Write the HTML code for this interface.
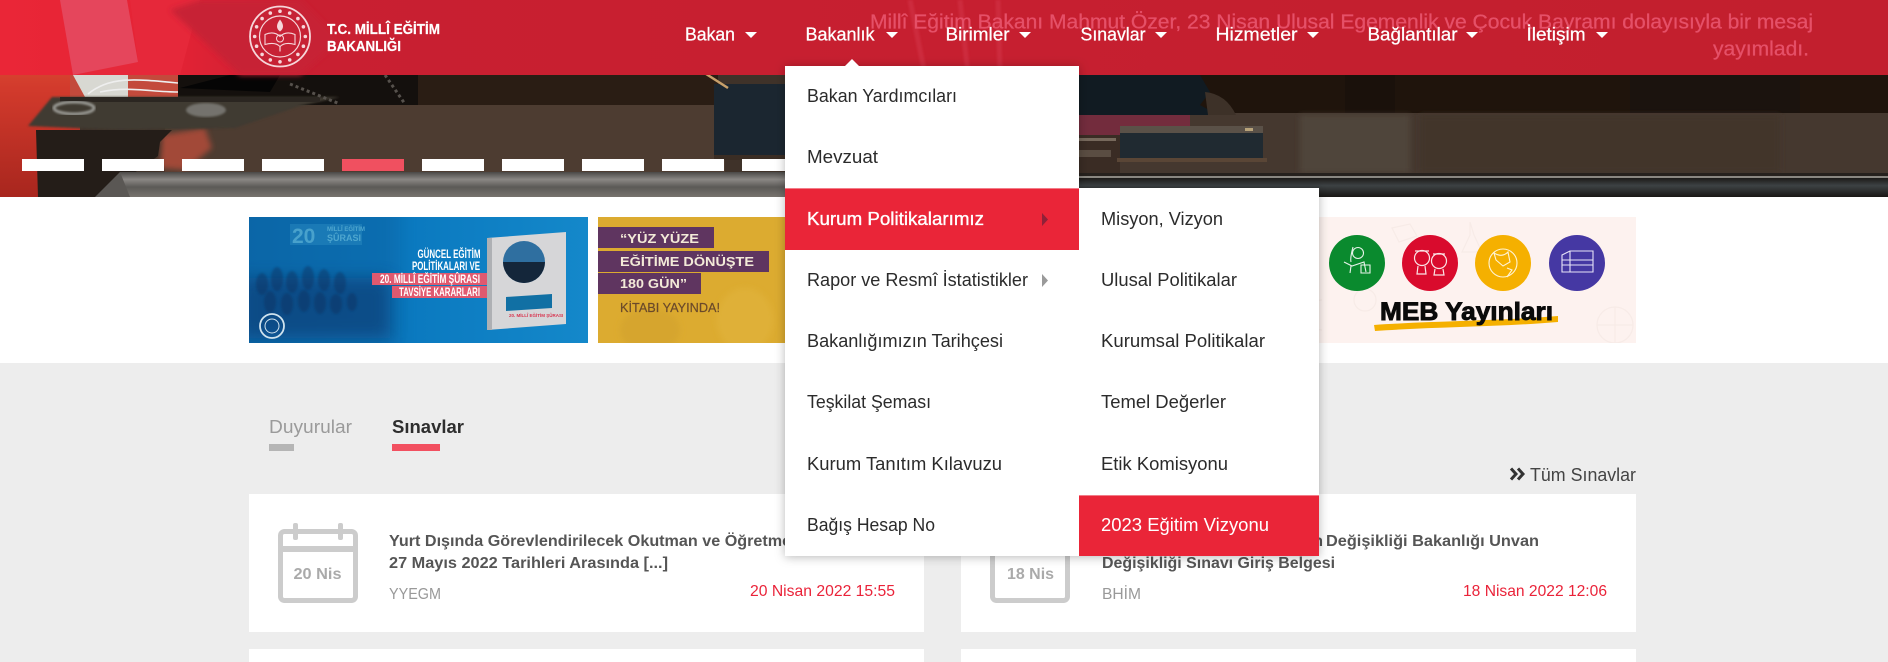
<!DOCTYPE html>
<html lang="tr">
<head>
<meta charset="utf-8">
<title>T.C. Millî Eğitim Bakanlığı</title>
<style>
html,body{margin:0;padding:0;background:#fff;width:1888px;height:662px;overflow:hidden}
svg{display:block;font-family:"Liberation Sans",Arial,sans-serif}
.nav text{fill:#fff;font-size:18px;stroke:#fff;stroke-width:.25}
.mi{fill:#2b2b2b;font-size:18px}
.ct{fill:#555;font-size:16px;font-weight:700}
.cs{fill:#999;font-size:16px}
.cd{fill:#ea2339;font-size:16px}
.ban{font-weight:700}
</style>
</head>
<body>
<svg xmlns="http://www.w3.org/2000/svg" width="1888" height="662" viewBox="0 0 1888 662">
<defs>
<filter id="b1" x="-5%" y="-5%" width="110%" height="110%"><feGaussianBlur stdDeviation="1"/></filter>
<filter id="b3" x="-20%" y="-20%" width="140%" height="140%"><feGaussianBlur stdDeviation="3"/></filter>
<filter id="b8" x="-30%" y="-30%" width="160%" height="160%"><feGaussianBlur stdDeviation="8"/></filter>
<filter id="sh" x="-10%" y="-10%" width="120%" height="120%"><feDropShadow dx="0" dy="1" stdDeviation="5" flood-color="#000" flood-opacity=".28"/></filter>
<clipPath id="c1"><rect x="249" y="217" width="339" height="126"/></clipPath>
<clipPath id="c2"><rect x="598" y="217" width="187" height="126"/></clipPath>
<clipPath id="c3"><rect x="1297" y="217" width="339" height="126"/></clipPath>
<linearGradient id="left" x1="0" y1="0" x2="0" y2="1"><stop offset="0" stop-color="#e8643c"/><stop offset=".45" stop-color="#d23a2c"/><stop offset="1" stop-color="#a8261e"/></linearGradient>
<linearGradient id="metal" x1="0" y1="0" x2="0" y2="1"><stop offset="0" stop-color="#4a4846"/><stop offset=".3" stop-color="#8a8784"/><stop offset=".6" stop-color="#5c5a57"/><stop offset="1" stop-color="#77736e"/></linearGradient>
<linearGradient id="black" x1="0" y1="0" x2="0" y2="1"><stop offset="0" stop-color="#1c1a18"/><stop offset=".4" stop-color="#3d4244"/><stop offset="1" stop-color="#191715"/></linearGradient>
<linearGradient id="ban1" x1="0" y1="0" x2="1" y2="0"><stop offset="0" stop-color="#0b6cae"/><stop offset=".5" stop-color="#0b7ac0"/><stop offset="1" stop-color="#1488ca"/></linearGradient>
<linearGradient id="hdr" x1="0" y1="0" x2="1" y2="0"><stop offset="0" stop-color="#ea2637"/><stop offset=".09" stop-color="#e42335"/><stop offset=".16" stop-color="#c91f31"/><stop offset="1" stop-color="#c21f2e"/></linearGradient>
</defs>

<!-- hero -->
<g>
<rect x="0" y="0" width="1888" height="197" fill="#3f3229"/>
<rect x="0" y="0" width="80" height="197" fill="url(#left)"/>
<rect x="70" y="75" width="110" height="25" fill="#c34a3c"/>
<polygon points="73,75 128,75 128,97 85,97" fill="#d8d8d2"/>
<path d="M88,94 C110,76 135,79 178,83 M100,92 C130,86 150,92 178,92" fill="none" stroke="#eee" stroke-width="1.6"/>
<rect x="178" y="75" width="240" height="30" fill="#14100d"/>
<rect x="418" y="75" width="300" height="30" fill="#2a1d14"/>
<rect x="165" y="105" width="560" height="68" fill="#4d3c31"/>
<path d="M162,135 L205,128 L212,148 L185,170 L160,168 Z" fill="#a24a38" filter="url(#b3)"/>
<polygon points="28,126 52,97 340,97 300,106 235,128 120,130" fill="#3f3a31" filter="url(#b1)"/>
<rect x="60" y="97" width="260" height="5" fill="#2b2621"/>
<ellipse cx="74" cy="108" rx="20" ry="6" fill="none" stroke="#9a9a94" stroke-width="3" filter="url(#b1)"/>
<ellipse cx="206" cy="110" rx="20" ry="7" fill="#8a8a86" opacity=".7" filter="url(#b1)"/>
<path d="M36,130 L172,130 L160,142 L158,156 L130,176 L95,197 L38,197 Z" fill="#241d18"/>
<path d="M180,88 L230,75 L280,75 L270,92 Z" fill="#050505"/>
<path d="M290,84 L340,104 M385,75 L405,104" stroke="#56514c" stroke-width="3" stroke-dasharray="3 3" fill="none"/>
<rect x="120" y="172" width="680" height="25" fill="url(#metal)"/>
<path d="M95,197 L120,172 L130,197 Z" fill="#5a5754"/>
<rect x="714" y="84" width="71" height="71" fill="#1b2630"/>
<rect x="714" y="155" width="71" height="5" fill="#3a2d24"/>
<path d="M703,72 L728,88" stroke="#c8a06a" stroke-width="2.5"/>
<!-- centre-right -->
<rect x="1079" y="75" width="809" height="38" fill="#1f140c"/>
<rect x="1345" y="75" width="50" height="38" fill="#1a110b"/>
<rect x="1630" y="75" width="170" height="38" fill="#1b130e"/>
<rect x="1079" y="113" width="809" height="60" fill="#45382f"/>
<rect x="1300" y="115" width="110" height="58" fill="#4f443a" filter="url(#b3)"/>
<rect x="1420" y="115" width="360" height="58" fill="#43352b" filter="url(#b3)"/>
<path d="M1079,75 L1200,75 L1210,92 L1200,105 L1218,115 L1079,115 Z" fill="#111b22"/>
<path d="M1205,92 Q1226,94 1236,115 L1208,115 Z" fill="#3d3128"/>
<rect x="1079" y="115" width="111" height="20" fill="#732c3d"/>
<rect x="1079" y="135" width="41" height="40" fill="#3a2c24"/>
<rect x="1079" y="138" width="37" height="3" fill="#77695c"/>
<rect x="1079" y="150" width="32" height="7" fill="#5a4d42"/>
<rect x="1120" y="126" width="143" height="7" fill="#5a5148"/>
<rect x="1120" y="133" width="143" height="25" fill="#202a31"/>
<rect x="1117" y="158" width="150" height="4" fill="#5a4636"/>
<rect x="1245" y="128" width="8" height="3" fill="#b8a37a"/>
<rect x="1079" y="173" width="809" height="3" fill="#26211d"/>
<rect x="1079" y="176" width="809" height="2" fill="#8a8781"/>
<rect x="1079" y="178" width="809" height="19" fill="url(#black)"/>
<!-- slide dots -->
<g fill="#fff">
<rect x="22" y="159" width="62" height="12"/><rect x="102" y="159" width="62" height="12"/>
<rect x="182" y="159" width="62" height="12"/><rect x="262" y="159" width="62" height="12"/>
<rect x="342" y="159" width="62" height="12" fill="#f05060"/><rect x="422" y="159" width="62" height="12"/>
<rect x="502" y="159" width="62" height="12"/><rect x="582" y="159" width="62" height="12"/>
<rect x="662" y="159" width="62" height="12"/><rect x="742" y="159" width="62" height="12"/>
</g>
</g>

<!-- header -->
<g>
<rect x="0" y="0" width="1888" height="75" fill="url(#hdr)"/>
<polygon points="130,0 138,60 73,75 180,75 200,0" fill="#e6283a"/>
<polygon points="60,0 127,0 138,62 73,75" fill="#e5465c"/>
<path d="M170,10 L200,0 L300,0 L340,40 L300,75 L240,75 Z" fill="#c72034" filter="url(#b3)"/>
<path d="M910,0 L925,75 M960,0 L968,75 M998,0 L1000,75" stroke="#d63a50" stroke-width="5" opacity=".45" fill="none" filter="url(#b1)"/>
<g fill="#e55068" stroke="#e55068" stroke-width=".3">
<text x="870" y="28.500" font-size="20" textLength="943" lengthAdjust="spacingAndGlyphs">Millî Eğitim Bakanı Mahmut Özer, 23 Nisan Ulusal Egemenlik ve Çocuk Bayramı dolayısıyla bir mesaj</text>
<text x="1713" y="55.500" font-size="20" textLength="96" lengthAdjust="spacingAndGlyphs">yayımladı.</text>
</g>

<!-- logo -->
<g fill="none" stroke="#f6d6da" transform="translate(280 36.5)">
<circle r="30" stroke-width="1.8"/>
<circle r="20.5" stroke-width="1.2"/>
<g fill="#f6d6da" stroke="none">
<circle cx="0" cy="-25.3" r="1.8"/><circle cx="9.7" cy="-23.4" r="1.8"/><circle cx="17.9" cy="-17.9" r="1.8"/><circle cx="23.4" cy="-9.7" r="1.8"/><circle cx="25.3" cy="0" r="1.8"/><circle cx="23.4" cy="9.7" r="1.8"/><circle cx="17.9" cy="17.9" r="1.8"/><circle cx="9.7" cy="23.4" r="1.8"/><circle cx="0" cy="25.3" r="1.8"/><circle cx="-9.7" cy="23.4" r="1.8"/><circle cx="-17.9" cy="17.9" r="1.8"/><circle cx="-23.4" cy="9.7" r="1.8"/><circle cx="-25.3" cy="0" r="1.8"/><circle cx="-23.4" cy="-9.7" r="1.8"/><circle cx="-17.9" cy="-17.9" r="1.8"/><circle cx="-9.7" cy="-23.4" r="1.8"/>
</g>
<path d="M0,-17 C4,-12 4,-8 0,-5 C-4,-8 -4,-12 0,-17 Z" fill="#f6d6da" stroke="none"/>
<path d="M-15,-2 C-8,-5 -3,-3 0,0 C3,-3 8,-5 15,-2 L15,8 C8,6 3,7 0,10 C-3,7 -8,6 -15,8 Z" stroke-width="1.1"/>
<circle cy="2" r="3.5" stroke-width="1"/>
<path d="M0,10 L0,15" stroke-width="1.2"/>
</g>
<g font-size="14.5" font-weight="700" fill="#fff" stroke="#fff" stroke-width=".2">
<text x="327" y="34" textLength="113" lengthAdjust="spacingAndGlyphs">T.C. MİLLÎ EĞİTİM</text>
<text x="327" y="51" textLength="74" lengthAdjust="spacingAndGlyphs">BAKANLIĞI</text>
</g>

<!-- nav -->
<g class="nav">
<text x="685" y="40.500" textLength="50" lengthAdjust="spacingAndGlyphs">Bakan</text>
<text x="805.500" y="40.500" textLength="69" lengthAdjust="spacingAndGlyphs">Bakanlık</text>
<text x="945.500" y="40.500" textLength="64" lengthAdjust="spacingAndGlyphs">Birimler</text>
<text x="1080.500" y="40.500" textLength="65" lengthAdjust="spacingAndGlyphs">Sınavlar</text>
<text x="1215.500" y="40.500" textLength="82" lengthAdjust="spacingAndGlyphs">Hizmetler</text>
<text x="1367.500" y="40.500" textLength="90" lengthAdjust="spacingAndGlyphs">Bağlantılar</text>
<text x="1526.500" y="40.500" textLength="59" lengthAdjust="spacingAndGlyphs">İletişim</text>
</g>
<g fill="#fff">
<polygon points="745,32 757,32 751,38"/><polygon points="886,32 898,32 892,38"/><polygon points="1019,32 1031,32 1025,38"/><polygon points="1155,32 1167,32 1161,38"/><polygon points="1307,32 1319,32 1313,38"/><polygon points="1466,32 1478,32 1472,38"/><polygon points="1596,32 1608,32 1602,38"/>
</g>
</g>

<!-- banners -->
<g>
<rect x="249" y="217" width="339" height="126" fill="url(#ban1)"/>
<g clip-path="url(#c1)">
<rect x="230" y="200" width="170" height="150" fill="#0a5f9e" opacity=".4" filter="url(#b8)"/>
<rect x="240" y="278" width="150" height="60" fill="#0b3f78" opacity=".7" filter="url(#b8)"/>
<g fill="#0a2f5c" opacity=".4" filter="url(#b1)">
<ellipse cx="262" cy="284" rx="6" ry="11"/><ellipse cx="277" cy="279" rx="6" ry="12"/><ellipse cx="292" cy="282" rx="6" ry="11"/><ellipse cx="308" cy="278" rx="6" ry="12"/><ellipse cx="324" cy="280" rx="6" ry="11"/><ellipse cx="340" cy="283" rx="6" ry="11"/>
<ellipse cx="270" cy="302" rx="6" ry="11"/><ellipse cx="287" cy="304" rx="6" ry="11"/><ellipse cx="304" cy="301" rx="6" ry="11"/><ellipse cx="320" cy="303" rx="6" ry="11"/><ellipse cx="336" cy="304" rx="6" ry="10"/><ellipse cx="352" cy="302" rx="5" ry="9"/>
</g>
</g>
<rect x="290" y="224" width="72" height="21" fill="#2d8fc3" opacity=".45"/>
<text x="292" y="243" font-size="21" font-weight="700" fill="#5cb2d6" opacity=".7">20</text>
<text x="327" y="231" font-size="6" font-weight="700" fill="#5cb2d6" opacity=".8">MİLLÎ EĞİTİM</text>
<text x="327" y="241" font-size="9" font-weight="700" fill="#5cb2d6" opacity=".8">ŞÛRASI</text>
<circle cx="272" cy="326" r="12" fill="none" stroke="#cfe3ee" stroke-width="1.8"/>
<circle cx="272" cy="326" r="7" fill="none" stroke="#cfe3ee"/>
<rect x="372" y="273" width="115" height="12" fill="#e0596f"/>
<rect x="392" y="286" width="95" height="12" fill="#e0596f"/>
<g class="ban" fill="#fff" font-size="12">
<text x="417.500" y="258" textLength="63" lengthAdjust="spacingAndGlyphs">GÜNCEL EĞİTİM</text>
<text x="412" y="270" textLength="68" lengthAdjust="spacingAndGlyphs">POLİTİKALARI VE</text>
<text x="380" y="283" textLength="100" lengthAdjust="spacingAndGlyphs">20. MİLLÎ EĞİTİM ŞÛRASI</text>
<text x="399" y="296" textLength="81" lengthAdjust="spacingAndGlyphs">TAVSİYE KARARLARI</text>
</g>
<polygon points="487,238 566,232 566,324 487,330" fill="#d6d6d8"/>
<rect x="487" y="238" width="5" height="92" fill="#aeb0b4"/>
<circle cx="524" cy="262" r="21" fill="#2f6fa0"/>
<path d="M503,262 A21,21 0 0 0 545,262 Z" fill="#14263a"/>
<polygon points="506,297 552,294 552,308 506,311" fill="#1170a4"/>
<text x="509" y="317" font-size="4.5" font-weight="700" fill="#d8344e">20. MİLLÎ EĞİTİM ŞÛRASI</text>
<rect x="598" y="217" width="187" height="126" fill="#dcab30"/>
<g clip-path="url(#c2)">
<ellipse cx="650" cy="330" rx="30" ry="22" fill="#d6a52d" filter="url(#b3)"/>
<ellipse cx="745" cy="320" rx="28" ry="32" fill="#dfb038" filter="url(#b3)"/>
</g>
<rect x="598" y="227" width="116" height="21" fill="#5f3560"/>
<rect x="598" y="251" width="171" height="21" fill="#5f3560"/>
<rect x="598" y="273" width="103" height="21" fill="#5f3560"/>
<g class="ban" fill="#f3ead8" font-size="12.5">
<text x="620" y="243" textLength="79" lengthAdjust="spacingAndGlyphs">“YÜZ YÜZE</text>
<text x="620" y="266" textLength="134" lengthAdjust="spacingAndGlyphs">EĞİTİME DÖNÜŞTE</text>
<text x="620" y="288" textLength="67" lengthAdjust="spacingAndGlyphs">180 GÜN”</text>
</g>
<text x="620" y="312" font-size="13" fill="#6b4a2a" stroke="#6b4a2a" stroke-width=".2" textLength="100" lengthAdjust="spacingAndGlyphs">KİTABI YAYINDA!</text>
<rect x="1297" y="217" width="339" height="126" fill="#fdf2ef"/>
<g fill="none" stroke="#f7ebe7" stroke-width="1.2" clip-path="url(#c3)">
<circle cx="1615" cy="325" r="18"/><path d="M1597,325 H1633 M1615,307 V343"/>
<path d="M1392,228 L1410,224 L1417,236 L1399,242 Z M1470,222 L1470,235 L1462,252 H1482 L1474,235 Z"/>
<circle cx="1365" cy="300" r="11"/><path d="M1322,300 a14,14 0 0 0 0,30"/>
</g>
<circle cx="1357" cy="263" r="28" fill="#0a8a2e"/>
<circle cx="1430" cy="263" r="28" fill="#d90b2d"/>
<circle cx="1503" cy="263" r="28" fill="#f5b000"/>
<circle cx="1577" cy="263" r="28" fill="#4538a3"/>
<g fill="none" stroke="#e8f3ea" stroke-width="1.1">
<circle cx="1358" cy="253" r="5.500"/><path d="M1353,247 Q1350,258 1351,262 M1344,262 L1352,266 L1364,262 L1366,272 M1351,266 L1350,273 M1361,265 H1370 V273 H1361 Z"/>
</g>
<g fill="none" stroke="#fbe3e5" stroke-width="1.2">
<circle cx="1422" cy="258" r="7.500"/><circle cx="1439" cy="261" r="7.500"/><path d="M1418,266 L1417,274 H1426 L1425,266 M1435,269 L1434,275 H1444 L1443,269 M1415,251 h14 M1433,254 h12"/>
</g>
<g fill="none" stroke="#fff4d6" stroke-width="1.1">
<circle cx="1503" cy="263" r="14"/><path d="M1494,253 Q1502,258 1508,252 L1510,262 L1503,266 L1496,260 Z M1507,268 L1512,270 L1507,277"/>
</g>
<g fill="none" stroke="#e7e4f7" stroke-width="1.1">
<path d="M1562,255 L1570,251 H1593 V272 H1570 L1562,272 Z M1562,260 H1593 M1562,265 H1593 M1570,251 V272"/>
</g>
<path d="M1374,325 C1430,321 1500,321 1558,316 L1558,322 C1500,327 1430,327 1375,331 Z" fill="#f5b000"/>
<text x="1380" y="320" font-size="25" font-weight="700" fill="#0a0a0a" stroke="#0a0a0a" stroke-width=".9" textLength="173" lengthAdjust="spacingAndGlyphs">MEB Yayınları</text>
</g>

<!-- content -->
<rect x="0" y="363" width="1888" height="299" fill="#ededed"/>
<text x="269" y="433" font-size="18" fill="#9a9a9a" textLength="83" lengthAdjust="spacingAndGlyphs">Duyurular</text>
<rect x="269" y="444" width="25" height="7" fill="#b5b5b5"/>
<text x="392" y="433" font-size="18" font-weight="700" fill="#2e2e2e" textLength="72" lengthAdjust="spacingAndGlyphs">Sınavlar</text>
<rect x="392" y="444" width="48" height="7" fill="#f25060"/>
<path d="M1511,468.500 L1516,474 L1511,479.500 M1518,468.500 L1523,474 L1518,479.500" fill="none" stroke="#333" stroke-width="3"/>
<text x="1530" y="481" font-size="18" fill="#444" textLength="106" lengthAdjust="spacingAndGlyphs">Tüm Sınavlar</text>

<!-- cards -->
<rect x="249" y="494" width="675" height="138" fill="#fff"/>
<rect x="961" y="494" width="675" height="138" fill="#fff"/>
<rect x="249" y="649" width="675" height="13" fill="#fff"/>
<rect x="961" y="649" width="675" height="13" fill="#fff"/>

<g id="cal1">
<rect x="280.500" y="531.500" width="75" height="69" rx="4" fill="none" stroke="#ccc" stroke-width="5"/>
<rect x="280" y="546" width="76" height="6" fill="#ccc"/>
<rect x="293" y="523" width="5" height="17" rx="2" fill="#ccc"/>
<rect x="338" y="523" width="5" height="17" rx="2" fill="#ccc"/>
<text x="293.500" y="579" font-size="16" font-weight="700" fill="#aaa" textLength="48" lengthAdjust="spacingAndGlyphs">20 Nis</text>
</g>
<text class="ct" x="389" y="546" textLength="412" lengthAdjust="spacingAndGlyphs">Yurt Dışında Görevlendirilecek Okutman ve Öğretmen</text>
<text class="ct" x="389" y="568" textLength="279" lengthAdjust="spacingAndGlyphs">27 Mayıs 2022 Tarihleri Arasında [...]</text>
<text class="cs" x="389" y="599" textLength="52" lengthAdjust="spacingAndGlyphs">YYEGM</text>
<text class="cd" x="750" y="596" textLength="145" lengthAdjust="spacingAndGlyphs">20 Nisan 2022 15:55</text>

<g id="cal2">
<rect x="992.500" y="531.500" width="75" height="69" rx="4" fill="none" stroke="#ccc" stroke-width="5"/>
<rect x="992" y="546" width="76" height="6" fill="#ccc"/>
<text x="1007" y="579" font-size="16" font-weight="700" fill="#aaa" textLength="47" lengthAdjust="spacingAndGlyphs">18 Nis</text>
</g>
<text class="ct" x="1326" y="546" textLength="213" lengthAdjust="spacingAndGlyphs">Değişikliği Bakanlığı Unvan</text>
<text class="ct" x="1323" y="546" text-anchor="end">Unvan</text>
<text class="ct" x="1102" y="568" textLength="233" lengthAdjust="spacingAndGlyphs">Değişikliği Sınavı Giriş Belgesi</text>
<text class="cs" x="1102" y="599" textLength="39" lengthAdjust="spacingAndGlyphs">BHİM</text>
<text class="cd" x="1463" y="596" textLength="144" lengthAdjust="spacingAndGlyphs">18 Nisan 2022 12:06</text>

<!-- dropdown -->
<g filter="url(#sh)">
<rect x="785" y="66" width="294" height="490" fill="#fff"/>
<rect x="1079" y="188" width="240" height="368" fill="#fff"/>
</g>
<polygon points="845,66 852,59 859,66" fill="#fff"/>
<rect x="785" y="188" width="294" height="62" fill="#ea2538"/>
<rect x="785" y="188" width="294" height="1" fill="#f27c88"/>
<rect x="1079" y="495" width="240" height="61" fill="#ea2538"/>
<rect x="1079" y="495" width="240" height="1" fill="#f27c88"/>

<text class="mi" x="807" y="102" textLength="150" lengthAdjust="spacingAndGlyphs">Bakan Yardımcıları</text>
<text class="mi" x="807" y="163" textLength="71" lengthAdjust="spacingAndGlyphs">Mevzuat</text>
<text class="mi" x="807" y="225" style="fill:#fff;stroke:#fff;stroke-width:.35" textLength="177" lengthAdjust="spacingAndGlyphs">Kurum Politikalarımız</text>
<polygon points="1042,213 1048,219.500 1042,226" fill="#8f2138"/>
<text class="mi" x="807" y="286" textLength="221" lengthAdjust="spacingAndGlyphs">Rapor ve Resmî İstatistikler</text>
<polygon points="1042,274 1048,280.500 1042,287" fill="#9a9a9a"/>
<text class="mi" x="807" y="347" textLength="196" lengthAdjust="spacingAndGlyphs">Bakanlığımızın Tarihçesi</text>
<text class="mi" x="807" y="408" textLength="124" lengthAdjust="spacingAndGlyphs">Teşkilat Şeması</text>
<text class="mi" x="807" y="470" textLength="195" lengthAdjust="spacingAndGlyphs">Kurum Tanıtım Kılavuzu</text>
<text class="mi" x="807" y="531" textLength="128" lengthAdjust="spacingAndGlyphs">Bağış Hesap No</text>

<text class="mi" x="1101" y="225" textLength="122" lengthAdjust="spacingAndGlyphs">Misyon, Vizyon</text>
<text class="mi" x="1101" y="286" textLength="136" lengthAdjust="spacingAndGlyphs">Ulusal Politikalar</text>
<text class="mi" x="1101" y="347" textLength="164" lengthAdjust="spacingAndGlyphs">Kurumsal Politikalar</text>
<text class="mi" x="1101" y="408" textLength="125" lengthAdjust="spacingAndGlyphs">Temel Değerler</text>
<text class="mi" x="1101" y="470" textLength="127" lengthAdjust="spacingAndGlyphs">Etik Komisyonu</text>
<text class="mi" x="1101" y="531" style="fill:#fff" textLength="168" lengthAdjust="spacingAndGlyphs">2023 Eğitim Vizyonu</text>
</svg>
</body>
</html>
